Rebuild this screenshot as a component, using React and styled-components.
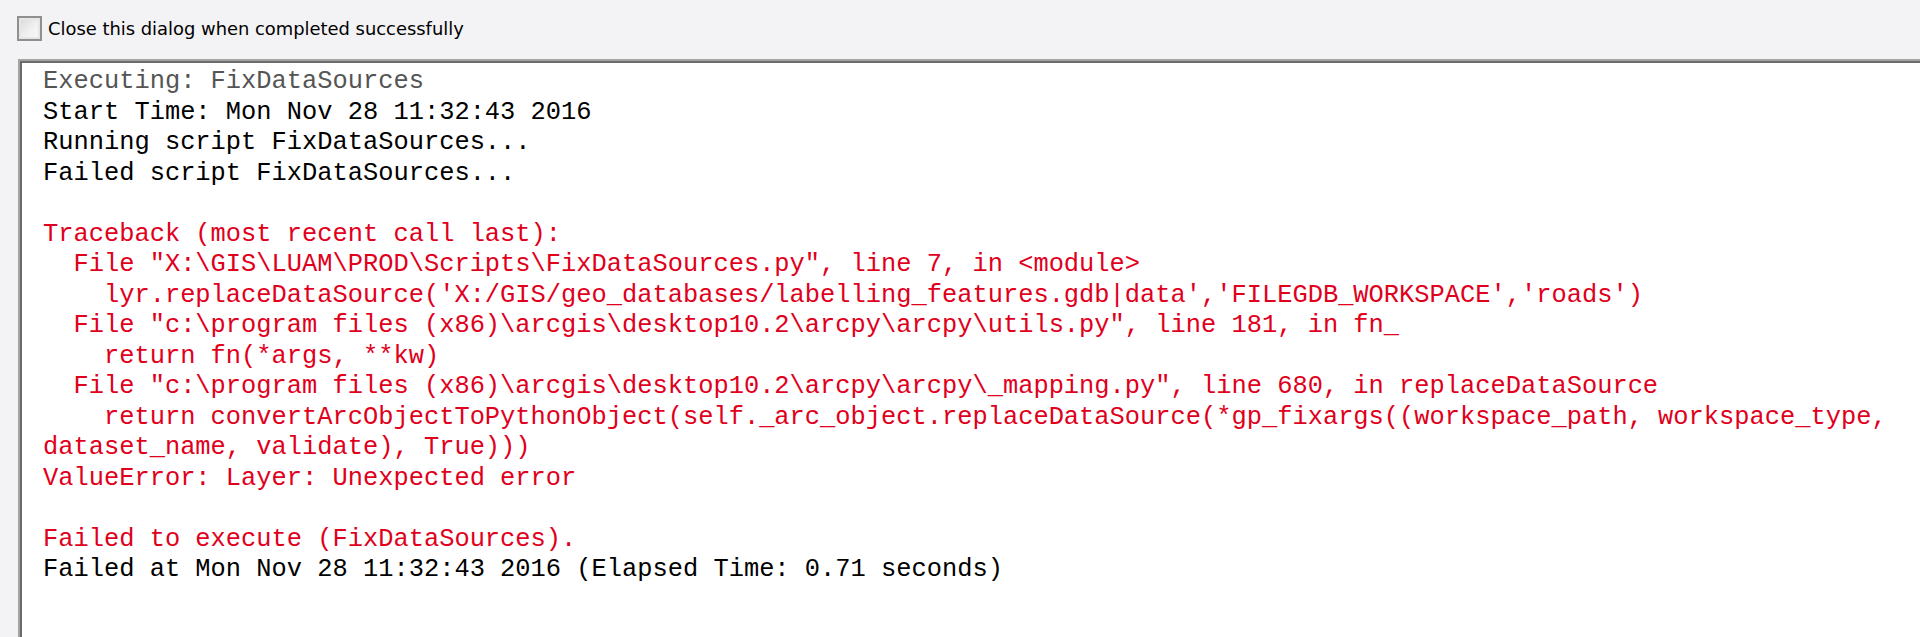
import React from "react";
import styled, { createGlobalStyle } from "styled-components";

const Global = createGlobalStyle`
  html, body { margin: 0; padding: 0; background: #f3f2f4; }
  body { width: 1920px; height: 637px; overflow: hidden; }
`;

const Dialog = styled.div`
  display: flex;
  flex-direction: column;
  width: 1920px;
  height: 637px;
  background: #f3f2f4;
  box-sizing: border-box;
  padding-top: 16px;
  padding-left: 17px;
`;

const OptionRow = styled.label`
  display: flex;
  align-items: center;
  gap: 6px;
  height: 25px;
  font-family: "DejaVu Sans", Tahoma, sans-serif;
  font-size: 17.9px;
  color: #000;
`;

const CheckBox = styled.span`
  display: inline-block;
  box-sizing: border-box;
  width: 25px;
  height: 25px;
  border: 2px solid #8f8f8f;
  background: linear-gradient(135deg, #d9d9d9 0%, #f2f2f2 60%, #fafafa 100%);
  box-shadow: inset 0 0 0 2px #e6e6e6;
`;

const OutputBox = styled.div`
  margin-top: 18px;
  margin-left: 1px;
  flex: 1;
  background: #fff;
  border-top: 2px solid #a3a3a3;
  border-left: 2px solid #a3a3a3;
  box-shadow: inset 2px 2px 0 #6b6b6b;
  padding: 6px 0 0 23px;
  overflow: hidden;
`;

const Line = styled.div`
  font-family: "Liberation Mono", "Courier New", monospace;
  font-size: 25.4px;
  line-height: 30.5px;
  height: 30.5px;
  white-space: pre;
  color: ${(p) =>
    p.$kind === "error" ? "#e0001c" : p.$kind === "info" ? "#555555" : "#000000"};
`;

const lines = [
  ["info", "Executing: FixDataSources"],
  ["msg", "Start Time: Mon Nov 28 11:32:43 2016"],
  ["msg", "Running script FixDataSources..."],
  ["msg", "Failed script FixDataSources..."],
  ["msg", ""],
  ["error", "Traceback (most recent call last):"],
  ["error", '  File "X:\\GIS\\LUAM\\PROD\\Scripts\\FixDataSources.py", line 7, in <module>'],
  ["error", "    lyr.replaceDataSource('X:/GIS/geo_databases/labelling_features.gdb|data','FILEGDB_WORKSPACE','roads')"],
  ["error", '  File "c:\\program files (x86)\\arcgis\\desktop10.2\\arcpy\\arcpy\\utils.py", line 181, in fn_'],
  ["error", "    return fn(*args, **kw)"],
  ["error", '  File "c:\\program files (x86)\\arcgis\\desktop10.2\\arcpy\\arcpy\\_mapping.py", line 680, in replaceDataSource'],
  ["error", "    return convertArcObjectToPythonObject(self._arc_object.replaceDataSource(*gp_fixargs((workspace_path, workspace_type,"],
  ["error", "dataset_name, validate), True)))"],
  ["error", "ValueError: Layer: Unexpected error"],
  ["msg", ""],
  ["error", "Failed to execute (FixDataSources)."],
  ["msg", "Failed at Mon Nov 28 11:32:43 2016 (Elapsed Time: 0.71 seconds)"],
];

export default function App() {
  return (
    <>
      <Global />
      <Dialog>
        <OptionRow>
          <CheckBox />
          Close this dialog when completed successfully
        </OptionRow>
        <OutputBox>
          {lines.map(([kind, text], i) => (
            <Line key={i} $kind={kind}>
              {text}
            </Line>
          ))}
        </OutputBox>
      </Dialog>
    </>
  );
}
